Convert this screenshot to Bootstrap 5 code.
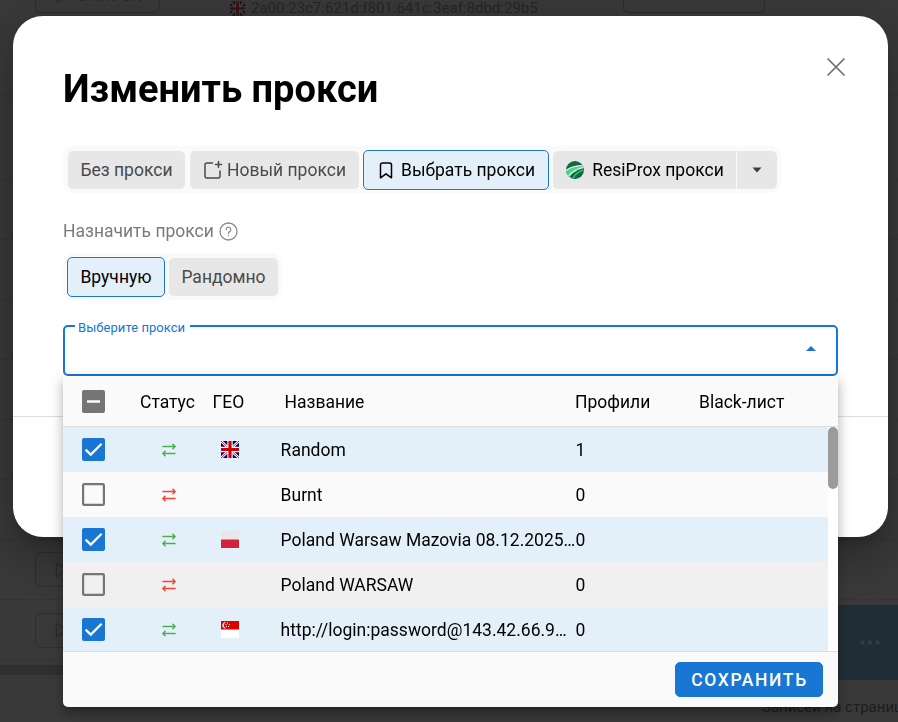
<!DOCTYPE html>
<html lang="ru">
<head>
    <meta charset="UTF-8">
    <meta name="viewport" content="width=device-width, initial-scale=1.0">
    <title>Изменить прокси</title>
    <!-- Bootstrap CSS -->
    <link href="https://cdn.jsdelivr.net/npm/bootstrap@5.3.2/dist/css/bootstrap.min.css" rel="stylesheet">
    <style>
        body {
            font-family: Roboto, "Liberation Sans", sans-serif;
            font-size: 17.5px;
            line-height: 1.2;
            color: #000;
            background-color: #393939;
            height: 722px;
            overflow: hidden;
        }
        /* Затемнённая страница под окном */
        .under-row {
            height: 60px;
            border-bottom: 1px solid #343434;
            padding-left: 35px;
            flex-shrink: 0;
        }
        .under-first {
            height: 26px;
            font-size: 15px;
            color: #262626;
        }
        .under-row-tall { height: 69px; }
        .under-row-big { height: 85px; }
        .under-row-last { height: 61px; }
        .under-btn {
            width: 125px;
            height: 35px;
            padding-left: 19px;
            border: 1px solid #29312c;
            border-radius: 5px;
            color: #262e29;
            font-weight: 500;
            letter-spacing: 1px;
        }
        .under-first .under-btn {
            margin-top: -22px;
            gap: 9px;
        }
        .under-action {
            width: 142px;
            height: 35px;
            margin-top: -22px;
            margin-left: 85px;
            border: 1px solid #2b2b2b;
            border-radius: 5px;
        }
        .under-flag {
            margin: 1px 6px 0 70px;
            filter: brightness(.3);
            opacity: .7;
        }
        .under-addr {
            width: 287px;
            margin-top: -1px;
            white-space: nowrap;
        }
        .under-scroll {
            height: 10px;
            margin-top: 4px;
            background-color: #2f2f2f;
        }
        .under-pager {
            margin-top: 23px;
            padding-left: 762px;
            font-size: 15px;
            white-space: nowrap;
            color: #1d1d1d;
        }
        .under-sticky {
            right: 0;
            top: 605px;
            width: 80px;
            height: 75px;
            padding-right: 18px;
            background-color: #212d36;
        }
        /* Окно */
        .proxy-modal { overflow: hidden; }
        .proxy-dialog {
            width: 875px;
            max-width: 875px;
            margin: 16px 0 0 13px;
        }
        .proxy-content {
            height: 521px;
            border: 0;
            border-radius: 30px;
            box-shadow: 0 11px 15px -7px rgba(0, 0, 0, .2), 0 24px 38px 3px rgba(0, 0, 0, .14), 0 9px 46px 8px rgba(0, 0, 0, .12);
            color: #000;
        }
        .proxy-body {
            flex: none;
            height: 401px;
            padding: 0 50px;
            border-bottom: 1px solid #dedede;
        }
        .proxy-head { height: 130px; }
        .proxy-title {
            font-size: 38px;
            font-weight: 700;
            line-height: 46px;
            margin-top: 50px;
        }
        .close-x {
            margin: 40px -9px 0 0;
            padding: 0;
            line-height: 0;
        }
        .toggle-set {
            background-color: #fafafa;
            border-radius: 10px;
            padding: 5px 4px 4px 5px;
            gap: 5px;
            width: max-content;
        }
        .toggle-set .btn {
            --bs-btn-font-size: 17.5px;
            --bs-btn-line-height: 22px;
            --bs-btn-border-radius: 5px;
            --bs-btn-bg: #e7e7e7;
            --bs-btn-color: #4a4a4a;
            --bs-btn-border-width: 0;
            height: 38px;
            padding: 0;
            white-space: nowrap;
        }
        .toggle-set .btn.active {
            --bs-btn-active-bg: #e3f0fa;
            --bs-btn-active-color: #000;
            --bs-btn-active-border-color: #1976d2;
            border: 1px solid #1976d2;
            height: 40px;
            margin: -1px;
        }
        .w-none { width: 117px; }
        .w-new { width: 169px; }
        .toggle-set .w-pick { width: 186px; padding-left: 2px; }
        .toggle-set .w-resi { width: 184px; --bs-btn-color: #000; }
        .toggle-set .w-caret { width: 41px; border-left: 1px solid #fafafa; }
        .toggle-set .w-manual { width: 98px; }
        .w-random { width: 109px; }
        .mode-set { margin-top: 10px; }
        .assign {
            color: #7a7a7a;
            margin-top: 26px;
            height: 24px;
            gap: 5px;
        }
        .pick-field {
            height: 51px;
            margin-top: 25px;
            border: 2px solid #1976d2;
            border-radius: 5px;
        }
        .pick-label {
            left: 10px;
            top: -7px;
            padding: 0 5px 0 3px;
            background-color: #fff;
            font-size: 13px;
            line-height: 16px;
            color: #1976d2;
            letter-spacing: .05px;
        }
        .pick-caret { padding: 0 20px 4px 0; }
        /* Выпадающий список */
        .proxy-menu {
            left: -2px;
            top: 49px;
            width: 775px;
            height: 331px;
            margin: 0;
            padding: 0;
            border: 0;
            border-radius: 0 0 5px 5px;
            background-color: #fafafa;
            color: #000;
            font-size: 17.5px;
            box-shadow: 0 5px 5px -3px rgba(0, 0, 0, .2), 0 8px 10px 1px rgba(0, 0, 0, .14), 0 3px 14px 2px rgba(0, 0, 0, .12);
        }
        .menu-head {
            height: 51px;
            border-bottom: 1px solid #dedede;
        }
        .menu-head > div + div { padding-top: 2px; }
        .menu-list {
            height: 224px;
            overflow: hidden;
            background-color: #fff;
        }
        .menu-row {
            height: 45px;
            background-color: #fafafa;
        }
        .menu-row.is-hover { background-color: #f0f0f0; }
        .menu-row.is-checked { background-color: #e3f0fa; }
        .c-check { width: 61px; padding-left: 18.5px; flex-shrink: 0; }
        .c-status { width: 90px; flex-shrink: 0; }
        .menu-head .c-status { width: 88.5px; }
        .c-geo { width: 32px; flex-shrink: 0; }
        .c-name { width: 295px; margin-left: 34.6px; flex-shrink: 0; }
        .menu-row .c-name, .menu-row .c-profiles { padding-top: 2px; }
        .menu-head .c-name { margin-left: 40px; width: 290.5px; }
        .c-profiles { width: 124px; }
        .c-status svg, .c-geo svg, .c-check svg { display: block; }
        .menu-scroll {
            width: 10px;
            flex-shrink: 0;
        }
        .menu-thumb {
            height: 62px;
            border-radius: 5px;
            background-color: #9b9b9b;
        }
        .menu-foot {
            height: 56px;
            border-top: 1px solid #dedede;
            padding-right: 15px;
        }
        .save-btn {
            --bs-btn-bg: #1976d2;
            --bs-btn-border-color: #1976d2;
            --bs-btn-border-radius: 5px;
            --bs-btn-font-weight: 500;
            width: 148px;
            height: 35px;
            padding: 2px 0 0 1px;
            font-size: 17.5px;
            line-height: 21px;
            letter-spacing: 1.6px;
        }
    </style>
</head>
<body>
    <!-- Символы иконок -->
    <svg width="0" height="0" class="position-absolute">
        <symbol id="i-uk" viewBox="0 0 18 17">
            <path fill="#006" d="M0 0h18v17H0z"/>
            <path stroke="#fff" stroke-width="2.6" d="M0 0l18 17M18 0L0 17"/>
            <path stroke="#c00" stroke-width=".9" d="M0 0l18 17M18 0L0 17"/>
            <path stroke="#fff" stroke-width="5.4" d="M9 0v17M0 8.5h18"/>
            <path stroke="#c00" stroke-width="3.2" d="M9 0v17M0 8.5h18"/>
        </symbol>
        <symbol id="i-pl" viewBox="0 0 18 17">
            <path fill="#e9e8e7" d="M0 0h18v8.5H0z"/>
            <path fill="#d4213d" d="M0 8.5h18V17H0z"/>
        </symbol>
        <symbol id="i-sg" viewBox="0 0 18 17">
            <path fill="#fff" d="M0 0h18v17H0z"/>
            <path fill="#df0000" d="M0 0h18v8.5H0z"/>
            <path fill="#fff" d="M5.2 1A3.3 3.3 0 1 0 5.2 7.5 3.4 3.4 0 0 1 5.2 1z"/>
            <path fill="#fff" d="M6 1.6h1v1H6zM4.4 3h1v1h-1zM7.8 3h1v1h-1zM5 5h1v1H5zM7.2 5h1v1h-1z"/>
        </symbol>
        <symbol id="i-swap" viewBox="0 0 14 14">
            <path fill="none" stroke="currentColor" stroke-width="1.5" stroke-linecap="round" stroke-linejoin="round" d="M1 3.5h12M10.9 1.3L13.1 3.5l-2.2 2.2M13 10.5H1M3.1 8.3L.9 10.5l2.2 2.2"/>
        </symbol>
        <symbol id="i-on" viewBox="0 0 23 23">
            <rect width="23" height="23" rx="2" fill="#1976d2"/>
            <path fill="none" stroke="#fff" stroke-width="2.3" d="M3.6 11.6l5.2 5L19.6 5.8"/>
        </symbol>
        <symbol id="i-off" viewBox="0 0 23 23">
            <rect x="1.1" y="1.1" width="20.8" height="20.8" rx="1.2" fill="none" stroke="#757575" stroke-width="2.2"/>
        </symbol>
        <symbol id="i-play" viewBox="0 0 14 16">
            <path fill="none" stroke="currentColor" stroke-width="1.3" stroke-linejoin="round" d="M1.5 1.5v13l11-6.5z"/>
        </symbol>
    </svg>

    <!-- Страница под окном -->
    <div class="d-flex flex-column">
        <div class="under-row under-first d-flex">
            <div class="under-btn d-flex align-items-center">
                <svg width="14" height="16"><use href="#i-play"/></svg>ЗАПУСК
            </div>
            <svg width="15" height="15" class="under-flag flex-shrink-0"><use href="#i-uk"/></svg>
            <div class="under-addr">2a00:23c7:621d:f801:641c:3eaf:8dbd:29b5</div>
            <div class="under-action"></div>
        </div>
        <div class="under-row under-row-tall"></div>
        <div class="under-row under-row-big"></div>
        <div class="under-row"></div>
        <div class="under-row"></div>
        <div class="under-row"></div>
        <div class="under-row"></div>
        <div class="under-row"></div>
        <div class="under-row"></div>
        <div class="under-row d-flex align-items-center">
            <div class="under-btn d-flex align-items-center"><svg width="14" height="16"><use href="#i-play"/></svg></div>
        </div>
        <div class="under-row under-row-last d-flex align-items-center">
            <div class="under-btn d-flex align-items-center"><svg width="14" height="16"><use href="#i-play"/></svg></div>
        </div>
        <div class="under-scroll"></div>
        <div class="under-pager">Записей на странице</div>
    </div>
    <div class="under-sticky position-absolute d-flex align-items-center justify-content-end">
        <svg width="20" height="5" fill="#353c41"><circle cx="2.5" cy="2.5" r="2.2"/><circle cx="10" cy="2.5" r="2.2"/><circle cx="17.5" cy="2.5" r="2.2"/></svg>
    </div>

    <!-- Окно изменения прокси -->
    <div class="modal d-block proxy-modal">
        <div class="modal-dialog proxy-dialog">
            <div class="modal-content proxy-content">
                <div class="proxy-body">
                    <div class="proxy-head d-flex justify-content-between align-items-start">
                        <h1 class="proxy-title mb-0">Изменить прокси</h1>
                        <button class="btn close-x" aria-label="Закрыть">
                            <svg width="20" height="20" fill="none" stroke="#6f6f6f" stroke-width="1.7" stroke-linecap="round"><path d="M2 2l16 16M18 2L2 18"/></svg>
                        </button>
                    </div>

                    <div class="toggle-set d-flex">
                        <button class="btn w-none">Без прокси</button>
                        <button class="btn w-new d-flex align-items-center justify-content-center gap-1">
                            <svg width="20" height="20" fill="none" stroke="currentColor" stroke-width="1.5" stroke-linecap="round" stroke-linejoin="round"><path d="M9.5 3H4a2 2 0 0 0-2 2v11a2 2 0 0 0 2 2h11a2 2 0 0 0 2-2v-5M15.5 1.5v6M12.5 4.5h6"/></svg>
                            Новый прокси
                        </button>
                        <button class="btn active w-pick d-flex align-items-center justify-content-center gap-2">
                            <svg width="14" height="17" fill="none" stroke="currentColor" stroke-width="1.5" stroke-linejoin="round"><path d="M1.5 15.8V3a2 2 0 0 1 2-2h7a2 2 0 0 1 2 2v12.8L7 11.8z"/></svg>
                            Выбрать прокси
                        </button>
                        <div class="btn-group">
                            <button class="btn w-resi d-flex align-items-center justify-content-center gap-2">
                                <svg width="18" height="18" viewBox="0 0 18 18">
                                    <clipPath id="ball"><circle cx="9" cy="9" r="9"/></clipPath>
                                    <g clip-path="url(#ball)">
                                        <path fill="#0a6b3c" d="M0 0h18v18H0z"/>
                                        <path fill="#3ddc84" d="M0 10Q7 5 18 5.5 8 8 2.5 16L0 14z"/>
                                        <path fill="none" stroke="#e7e7e7" stroke-width="1.5" d="M-.5 9.6Q7 4.5 18 4.8M2 16Q8 8 18 6.3"/>
                                        <path fill="none" stroke="#2cc46f" stroke-width="1.5" d="M7 17.5Q10 11 17.5 9"/>
                                    </g>
                                </svg>
                                ResiProx прокси
                            </button>
                            <button class="btn w-caret d-flex align-items-center justify-content-center" aria-label="Ещё">
                                <svg width="10" height="6" fill="#3c3c3c"><path d="M.5.5h9L5 5.5z"/></svg>
                            </button>
                        </div>
                    </div>

                    <div class="assign d-flex align-items-center">
                        Назначить прокси
                        <svg width="19" height="19" fill="none" stroke="#8a8a8a" stroke-width="1.3" stroke-linecap="round"><circle cx="9.5" cy="9.5" r="8.5"/><path d="M7.2 7.5a2.3 2.3 0 1 1 3.6 1.9q-1.3.8-1.3 1.9M9.5 13.7v.1"/></svg>
                    </div>

                    <div class="toggle-set mode-set d-flex">
                        <button class="btn active w-manual">Вручную</button>
                        <button class="btn w-random">Рандомно</button>
                    </div>

                    <div class="pick-field position-relative d-flex align-items-center justify-content-end">
                        <span class="pick-label position-absolute">Выберите прокси</span>
                        <span class="pick-caret d-flex"><svg width="10" height="5" fill="#1976d2"><path d="M0 5h10L5 0z"/></svg></span>

                        <div class="dropdown-menu show proxy-menu">
                            <div class="menu-head d-flex align-items-center">
                                <div class="c-check"><svg width="23" height="23"><rect width="23" height="23" rx="2" fill="#757575"/><path stroke="#fff" stroke-width="2.4" d="M5 11.5h13"/></svg></div>
                                <div class="c-status ps-3">Статус</div>
                                <div class="c-geo">ГЕО</div>
                                <div class="c-name">Название</div>
                                <div class="c-profiles">Профили</div>
                                <div>Black-лист</div>
                            </div>
                            <div class="menu-list d-flex">
                                <div class="flex-grow-1" id="proxy-rows"></div>
                                <div class="menu-scroll"><div class="menu-thumb"></div></div>
                            </div>
                            <div class="menu-foot d-flex align-items-center justify-content-end">
                                <button class="btn btn-primary save-btn">СОХРАНИТЬ</button>
                            </div>
                        </div>
                    </div>
                </div>
            </div>
        </div>
    </div>

    <!-- Bootstrap JS -->
    <script src="https://cdn.jsdelivr.net/npm/bootstrap@5.3.2/dist/js/bootstrap.bundle.min.js"></script>
    <script>
        const proxies = [
            { name: 'Random', flag: 'uk', ok: true, checked: true, profiles: 1 },
            { name: 'Burnt', flag: '', ok: false, checked: false, profiles: 0 },
            { name: 'Poland Warsaw Mazovia 08.12.2025…', flag: 'pl', ok: true, checked: true, profiles: 0 },
            { name: 'Poland WARSAW', flag: '', ok: false, checked: false, hover: true, profiles: 0 },
            { name: 'http://login:password@143.42.66.9…', flag: 'sg', ok: true, checked: true, profiles: 0 }
        ];

        // Строки списка прокси
        document.getElementById('proxy-rows').innerHTML = proxies.map(p => `
            <div class="menu-row d-flex align-items-center ${p.checked ? 'is-checked' : ''} ${p.hover ? 'is-hover' : ''}">
                <div class="c-check"><svg width="23" height="23"><use href="#i-${p.checked ? 'on' : 'off'}"/></svg></div>
                <div class="c-status d-flex justify-content-center"><svg width="14" height="14" color="${p.ok ? '#4caf50' : '#f44336'}"><use href="#i-swap"/></svg></div>
                <div class="c-geo d-flex justify-content-center">${p.flag ? `<svg width="18" height="17"><use href="#i-${p.flag}"/></svg>` : ''}</div>
                <div class="c-name text-nowrap">${p.name}</div>
                <div class="c-profiles">${p.profiles}</div>
            </div>
        `).join('');
    </script>
</body>
</html>
